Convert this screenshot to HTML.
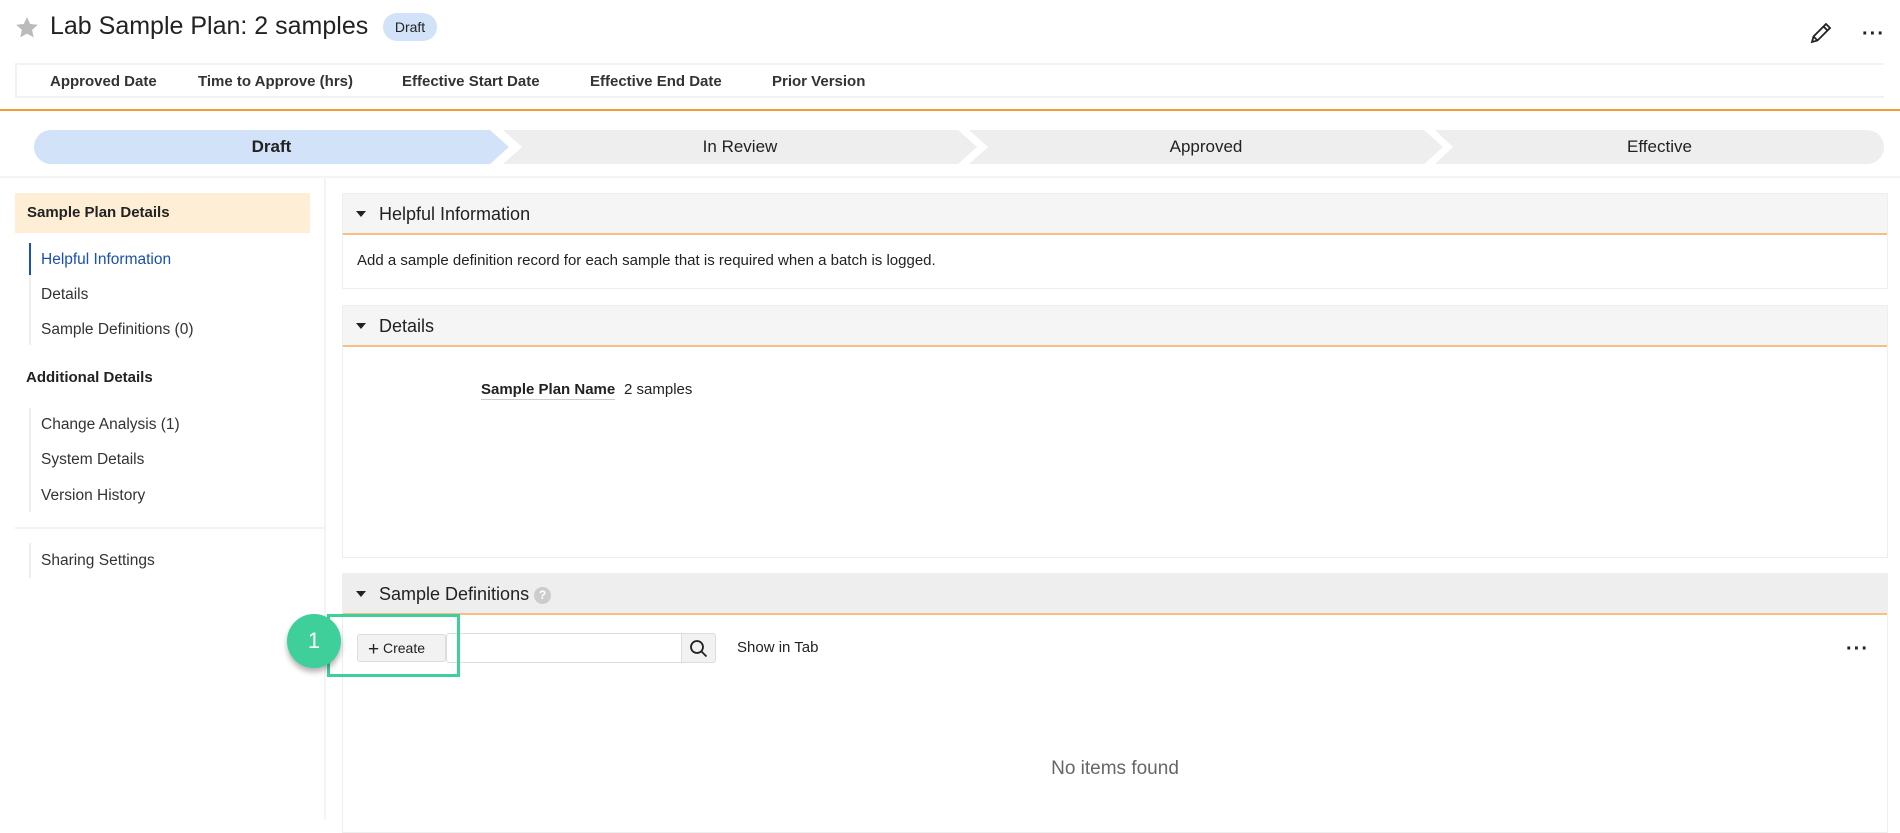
<!DOCTYPE html>
<html><head><meta charset="utf-8"><style>
*{box-sizing:border-box;margin:0;padding:0}
body{width:1900px;height:820px;overflow:hidden;background:#fff;font-family:"Liberation Sans",sans-serif;color:#222;position:relative}
.a{position:absolute}
.fl{font-size:15px;font-weight:bold;color:#333;top:73px}
.seg{position:absolute;top:130px;height:34px;line-height:34px;text-align:center;font-size:17px;background:#eee}
.nav{position:absolute;left:41px;font-size:15.5px;color:#333}
.panel{position:absolute;left:342px;width:1546px;border:1px solid #eee}
.ph{height:41px;background:#f5f5f5;border-bottom:2px solid #f7be7e;font-size:18px;line-height:40px;padding-left:36px;position:relative}
.ph:before{content:"";position:absolute;left:13px;top:17px;border-left:5px solid transparent;border-right:5px solid transparent;border-top:6px solid #222}
</style></head><body>
<svg class="a" style="left:15px;top:16px" width="24" height="24" viewBox="0 0 24 24"><path d="M12 1l3.2 7 7.6.8-5.7 5.1 1.6 7.5L12 17.6 5.3 21.4l1.6-7.5L1.2 8.8 8.8 8z" fill="#bbb"/></svg>
<div class="a" style="left:50px;top:12px;font-size:25px;color:#222">Lab Sample Plan: 2 samples</div>
<div class="a" style="left:383px;top:13px;width:54px;height:28px;border-radius:14px;background:#d2e2f8;font-size:14px;line-height:28px;text-align:center">Draft</div>
<svg class="a" style="left:1808px;top:20px" width="26" height="26" viewBox="0 0 26 26" fill="none" stroke="#222" stroke-width="1.8"><path d="M4 22l1.5-5.5L18 4l4 4L9.5 20.5z M15.5 6.5l4 4 M5.5 16.5l4 4"/></svg>
<div class="a" style="left:1862px;top:23px;font-size:20px;font-weight:bold;letter-spacing:1px">···</div>
<div class="a" style="left:15px;top:63px;width:1869px;height:35px;border-top:2px solid #f2f2f2;border-bottom:2px solid #f2f2f2;border-left:2px solid #f2f2f2"></div>
<div class="a fl" style="left:50px">Approved Date</div>
<div class="a fl" style="left:198px">Time to Approve (hrs)</div>
<div class="a fl" style="left:402px">Effective Start Date</div>
<div class="a fl" style="left:590px">Effective End Date</div>
<div class="a fl" style="left:772px">Prior Version</div>
<div class="a" style="left:0;top:109px;width:1900px;height:2px;background:#f39a33"></div>
<div class="seg" style="left:34px;width:475px;background:#d2e2f8;border-radius:17px 0 0 17px;font-weight:bold;clip-path:polygon(0 0,96% 0,100% 50%,96% 100%,0 100%)">Draft</div>
<div class="seg" style="left:503px;width:474px;clip-path:polygon(0 0,96% 0,100% 50%,96% 100%,0 100%,4% 50%)">In Review</div>
<div class="seg" style="left:969px;width:474px;clip-path:polygon(0 0,96% 0,100% 50%,96% 100%,0 100%,4% 50%)">Approved</div>
<div class="seg" style="left:1435px;width:449px;border-radius:0 17px 17px 0;clip-path:polygon(0 0,100% 0,100% 100%,0 100%,4% 50%)">Effective</div>
<div class="a" style="left:0;top:176px;width:1900px;height:2px;background:#f4f4f4"></div>
<div class="a" style="left:324px;top:178px;width:2px;height:642px;background:#f4f4f4"></div>
<div class="a" style="left:15px;top:193px;width:295px;height:40px;background:#ffeed6;font-size:15px;font-weight:bold;line-height:40px;padding-left:12px">Sample Plan Details</div>
<div class="a" style="left:29px;top:243px;width:2px;height:32px;background:#1a4fb3"></div>
<div class="a" style="left:29px;top:275px;width:2px;height:70px;background:#eee"></div>
<div class="nav" style="top:251px;color:#1a4fb3">Helpful Information</div>
<div class="nav" style="top:286px">Details</div>
<div class="nav" style="top:321px">Sample Definitions (0)</div>
<div class="a" style="left:26px;top:369px;font-size:15px;font-weight:bold">Additional Details</div>
<div class="a" style="left:29px;top:408px;width:2px;height:104px;background:#eee"></div>
<div class="nav" style="top:416px">Change Analysis (1)</div>
<div class="nav" style="top:451px">System Details</div>
<div class="nav" style="top:487px">Version History</div>
<div class="a" style="left:15px;top:527px;width:310px;height:2px;background:#f2f2f2"></div>
<div class="a" style="left:29px;top:543px;width:2px;height:35px;background:#eee"></div>
<div class="nav" style="top:552px">Sharing Settings</div>
<div class="panel" style="top:193px;height:96px"><div class="ph">Helpful Information</div><div style="padding:17px 14px;font-size:15px">Add a sample definition record for each sample that is required when a batch is logged.</div></div>
<div class="panel" style="top:305px;height:253px"><div class="ph">Details</div></div>
<div class="a" style="left:481px;top:381px;font-size:15px;font-weight:bold;border-bottom:1px solid #ccc;padding-bottom:1px">Sample Plan Name</div>
<div class="a" style="left:624px;top:381px;font-size:15px">2 samples</div>
<div class="panel" style="top:573px;height:260px"><div class="ph" style="background:#eee">Sample Definitions <span style="display:inline-block;width:17px;height:17px;border-radius:50%;background:#ccc;color:#fff;font-size:12px;line-height:17px;text-align:center;vertical-align:1px;font-weight:bold">?</span></div></div>
<div class="a" style="left:357px;top:634px;width:89px;height:28px;border:1px solid #ddd;border-radius:3px;background:#f2f2f2;font-size:14px;line-height:26px;padding-left:10px"><span style="font-size:19px;vertical-align:-2px">+</span> Create</div>
<div class="a" style="left:446px;top:633px;width:236px;height:30px;border:1px solid #ddd;border-radius:3px 0 0 3px"></div>
<div class="a" style="left:681px;top:633px;width:35px;height:30px;border:1px solid #ddd;background:#f2f2f2;border-radius:0 3px 3px 0"></div>
<svg class="a" style="left:689px;top:639px" width="19" height="19" viewBox="0 0 19 19" fill="none" stroke="#222" stroke-width="1.8"><circle cx="8" cy="8" r="6"/><path d="M12.5 12.5l5 5"/></svg>
<div class="a" style="left:737px;top:639px;font-size:15px">Show in Tab</div>
<div class="a" style="left:1846px;top:638px;font-size:20px;font-weight:bold;letter-spacing:1px">···</div>
<div class="a" style="left:327px;top:614px;width:133px;height:63px;border:3px solid #3ecf9b"></div>
<div class="a" style="left:287px;top:614px;width:54px;height:54px;border-radius:50%;background:#3ecf9b;color:#fff;font-size:22px;line-height:54px;text-align:center;box-shadow:0 4px 6px rgba(0,0,0,.3)">1</div>
<div class="a" style="left:1015px;top:758px;width:200px;text-align:center;font-size:19px;color:#666">No items found</div>
</body></html>
